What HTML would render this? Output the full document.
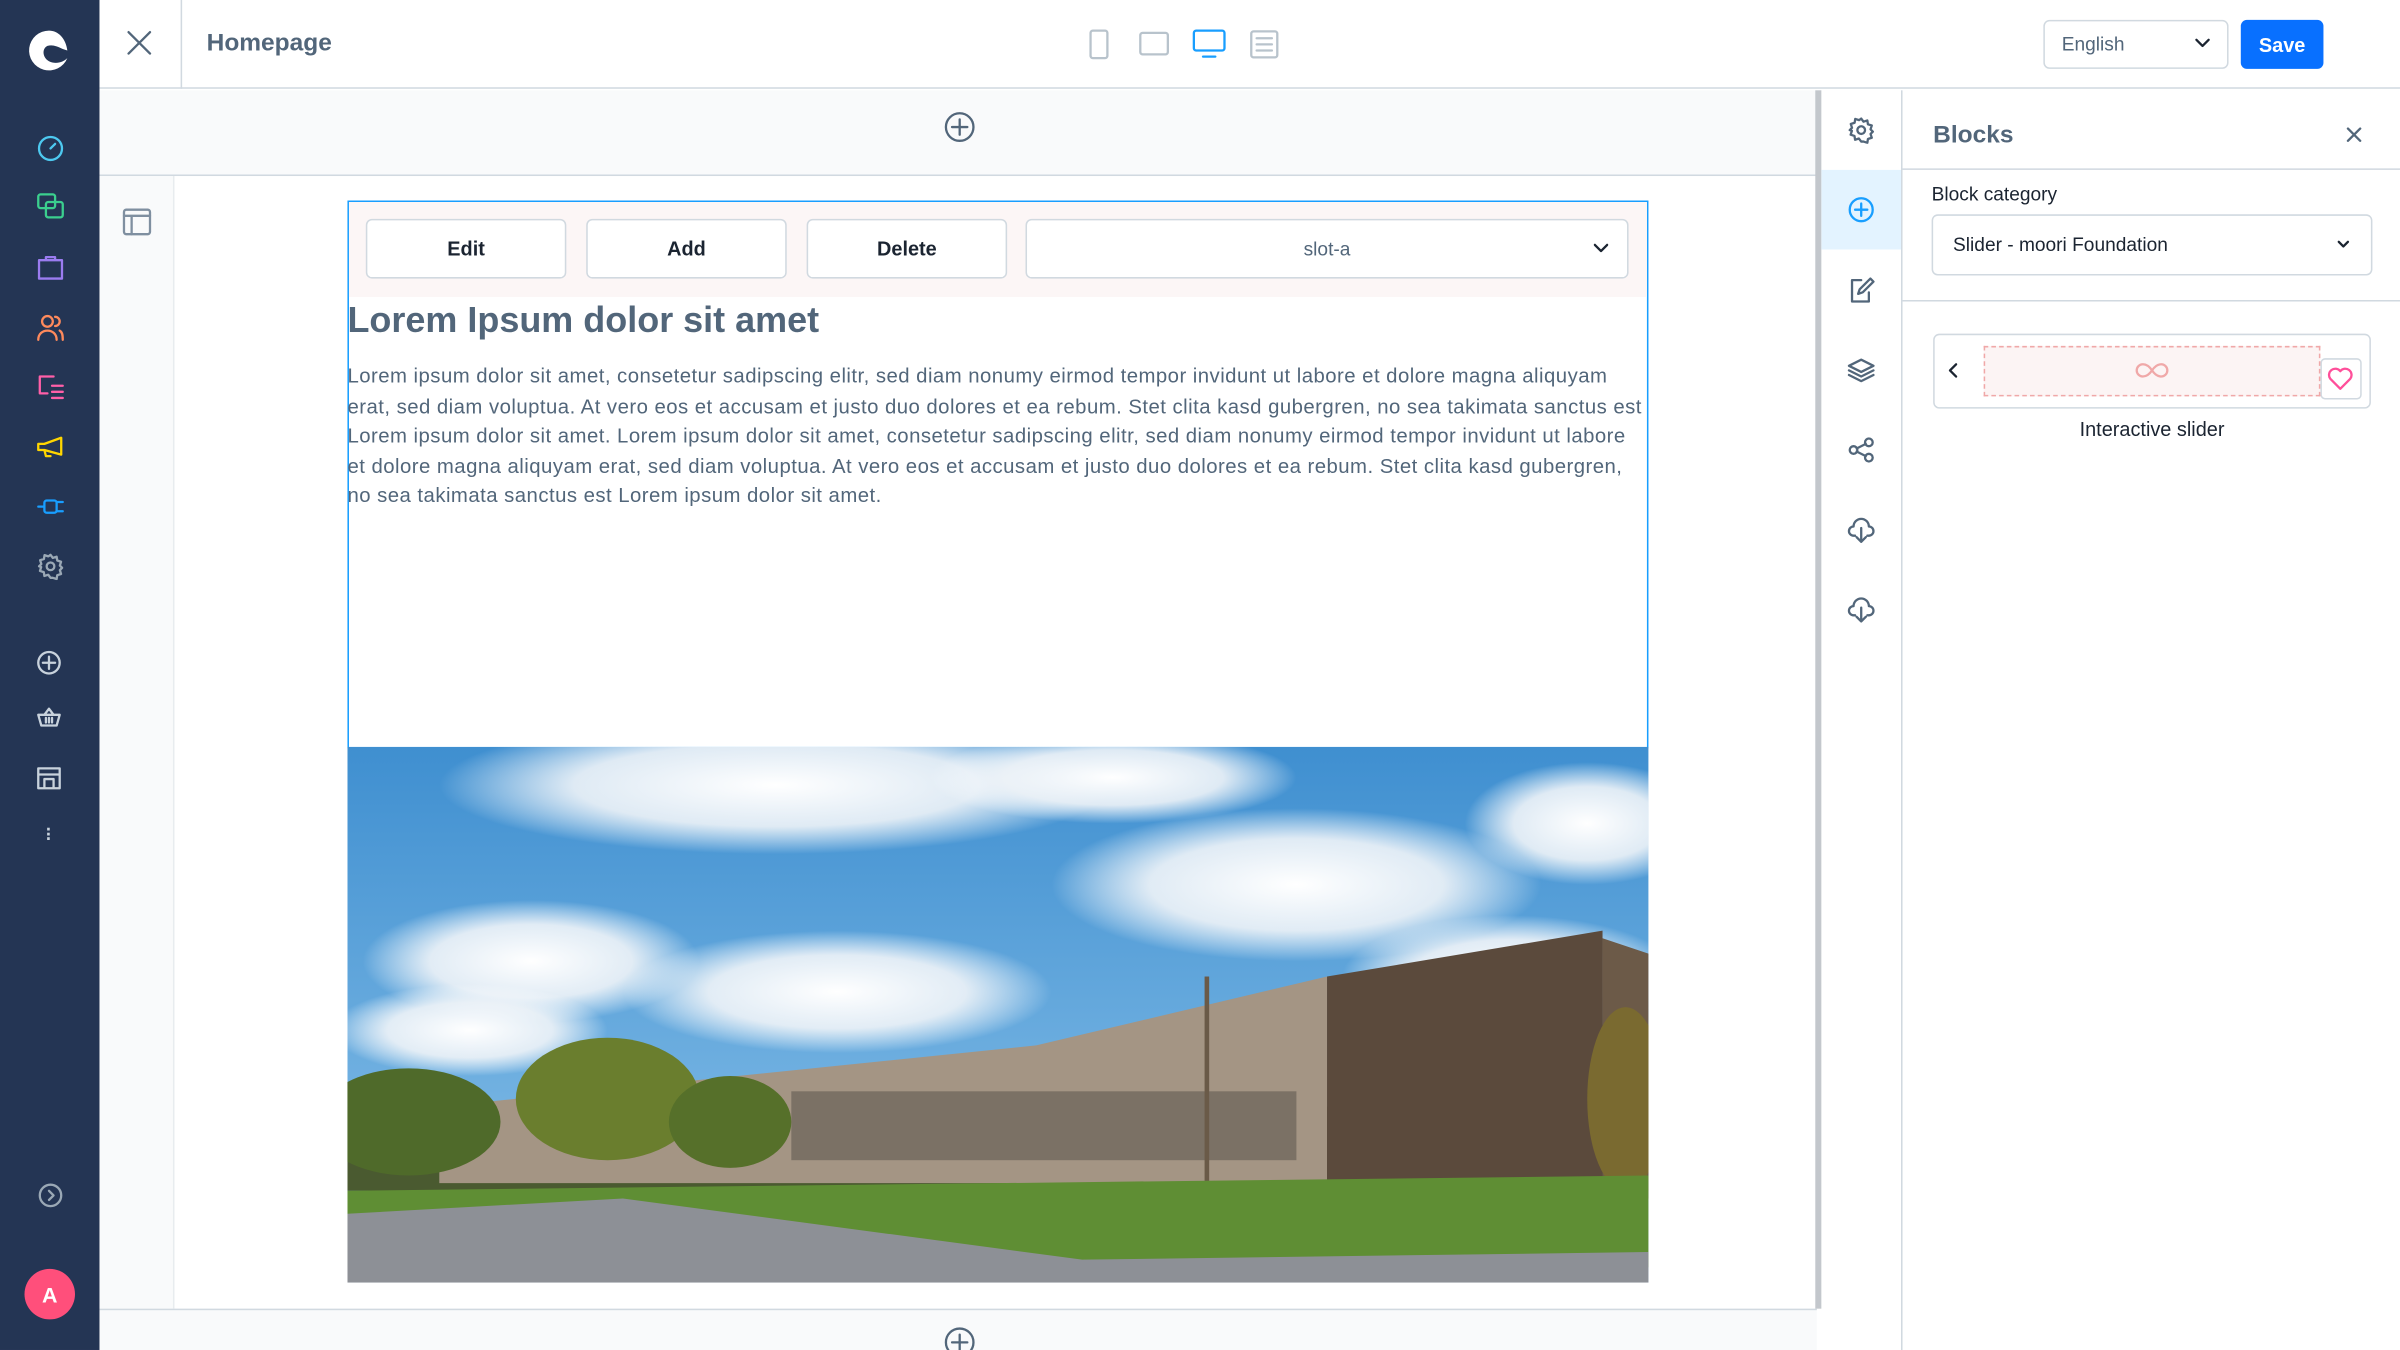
<!DOCTYPE html>
<html><head><meta charset="utf-8"><style>
*{box-sizing:border-box;margin:0;padding:0}
html,body{width:2400px;height:1350px;overflow:hidden;background:#fff}
#r{width:1568px;height:882px;transform:scale(1.5306);transform-origin:0 0;position:relative;font-family:"Liberation Sans",sans-serif;color:#52667a}
.a{position:absolute}
svg{position:absolute;fill:none;stroke-width:1.5;stroke-linecap:round;stroke-linejoin:round}
.btn{position:absolute;top:143px;height:39px;width:131px;border:1px solid #d1d9e0;border-radius:4px;background:#fff;font-size:13px;font-weight:bold;color:#1b2431;display:flex;align-items:center;justify-content:center}
</style></head><body><div id="r">
<div class="a" style="left:0;top:0;width:65px;height:882px;background:#243554"></div>
<svg style="left:16px;top:17px" width="32" height="32" viewBox="0 0 32 32"><path d="M16 3a13 13 0 1 0 12 18c-3 3-8 4-12 2-4-2-5-8-1-10 3-1 6 0 10 2l3 1c-1-8-6-13-12-13z" fill="#fff" stroke="none"/></svg>
<svg style="left:24px;top:88px" width="18" height="18" viewBox="0 0 18 18" stroke="#4dc9f0"><circle cx="9" cy="9" r="7.5"/><path d="M9 9l3-3"/></svg>
<svg style="left:24px;top:126px" width="18" height="18" viewBox="0 0 18 18" stroke="#3bcf8e"><rect x="1" y="1" width="11" height="9" rx="1.5"/><rect x="6" y="6" width="11" height="10" rx="1.5"/></svg>
<svg style="left:24px;top:166px" width="18" height="18" viewBox="0 0 18 18" stroke="#9b7cf0"><path d="M1.5 4h15v12h-15zM6 4V2h6v2"/></svg>
<svg style="left:24px;top:205px" width="18" height="18" viewBox="0 0 18 18" stroke="#ff8a5c"><circle cx="7" cy="5" r="3.5"/><path d="M1 17c0-4 3-6 6-6s6 2 6 6M12 2a3 3 0 0 1 0 6M15 11c2 1 2 4 2 6"/></svg>
<svg style="left:24px;top:244px" width="18" height="18" viewBox="0 0 18 18" stroke="#ff5fa8"><path d="M8 2H2v11h5M10 8h7M10 12h7M10 16h7M8 2h3"/></svg>
<svg style="left:24px;top:283px" width="18" height="18" viewBox="0 0 18 18" stroke="#ffd600"><path d="M1 7h4l11-4v11L5 11H1zM5 11l1 4h3"/></svg>
<svg style="left:24px;top:322px" width="18" height="18" viewBox="0 0 18 18" stroke="#189eff"><rect x="5" y="5" width="8" height="8" rx="1.5"/><path d="M1 9h4M13 6h4M13 12h4"/></svg>
<svg style="left:24px;top:361px" width="18" height="18" viewBox="0 0 18 18" stroke="#9aa8b5"><circle cx="9" cy="9" r="2.5"/><path d="M9 1.5l1.5 2 2.5-.8.4 2.5 2.5.8-.8 2.5 1.5 1.5-1.5 1.5.8 2.5-2.5.8-.4 2.5-2.5-.8L9 16.5l-1.5-2-2.5.8-.4-2.5-2.5-.8.8-2.5L1.5 9 3 7.5l-.8-2.5 2.5-.8.4-2.5 2.5.8z"/></svg>
<svg style="left:23px;top:424px" width="18" height="18" viewBox="0 0 18 18" stroke="#c8d2dc"><circle cx="9" cy="9" r="7"/><path d="M9 5v8M5 9h8"/></svg>
<svg style="left:23px;top:460px" width="18" height="18" viewBox="0 0 18 18" stroke="#c8d2dc"><path d="M2 7h14l-2 7H4zM6 7l3-4 3 4M7 9v3M9 9v3M11 9v3"/></svg>
<svg style="left:23px;top:499px" width="18" height="18" viewBox="0 0 18 18" stroke="#c8d2dc"><path d="M2 3h14v13H2zM2 7h14M6 16v-6h6v6"/></svg>
<div class="a" style="left:30px;top:541px;color:#c8d2dc;font-size:12px;line-height:3px;font-weight:bold">·<br>·<br>·</div>
<svg style="left:24px;top:772px" width="18" height="18" viewBox="0 0 18 18" stroke="#9aa8b5"><circle cx="9" cy="9" r="7"/><path d="M8 6l3 3-3 3"/></svg>
<div class="a" style="left:16px;top:829px;width:33px;height:33px;border-radius:50%;background:#ff4f7b;color:#fff;font-size:14px;font-weight:bold;display:flex;align-items:center;justify-content:center">A</div>
<div class="a" style="left:65px;top:0;width:1503px;height:58px;border-bottom:1px solid #d1d9e0;background:#fff"></div>
<svg style="left:82px;top:19px" width="18" height="18" viewBox="0 0 18 18" stroke="#52667a"><path d="M2 2l14 14M16 2L2 16"/></svg>
<div class="a" style="left:118px;top:0;width:1px;height:58px;background:#d1d9e0"></div>
<div class="a" style="left:135px;top:20px;font-size:16px;font-weight:bold">Homepage</div>
<svg style="left:711px;top:19px" width="14" height="20" viewBox="0 0 14 20" stroke="#b8c3cc" stroke-width="1.2"><rect x="1.5" y="1" width="11" height="18" rx="1.5"/></svg>
<svg style="left:744px;top:20px" width="20" height="17" viewBox="0 0 20 17" stroke="#b8c3cc" stroke-width="1.2"><rect x="1" y="1.5" width="18" height="14" rx="1.5"/></svg>
<svg style="left:779px;top:19px" width="22" height="20" viewBox="0 0 22 20" stroke="#189eff"><rect x="1" y="1" width="20" height="13" rx="1.5"/><path d="M7 18h8"/></svg>
<svg style="left:816px;top:19px" width="20" height="20" viewBox="0 0 20 20" stroke="#b8c3cc" stroke-width="1.2"><rect x="1.5" y="1.5" width="17" height="17" rx="1.5"/><path d="M5 6h10M5 10h10M5 14h10"/></svg>
<div class="a" style="left:1335px;top:13px;width:121px;height:32px;border:1px solid #d1d9e0;border-radius:4px;font-size:12.5px;padding:8px 11px">English</div>
<svg style="left:1433px;top:23px" width="12" height="10" viewBox="0 0 12 10" stroke="#1b2431" stroke-width="1.8"><path d="M2 3l4 4 4-4"/></svg>
<div class="a" style="left:1464px;top:13px;width:54px;height:32px;border-radius:4px;background:#0870ff;color:#fff;font-size:13px;font-weight:bold;display:flex;align-items:center;justify-content:center">Save</div>
<div class="a" style="left:65px;top:59px;width:1122px;height:56px;background:#f9fafb;border-bottom:1px solid #d1d9e0"></div>
<svg style="left:617px;top:73px" width="20" height="20" viewBox="0 0 20 20" stroke="#52667a" stroke-width="1.3"><circle cx="10" cy="10" r="9"/><path d="M10 5v10M5 10h10"/></svg>
<div class="a" style="left:65px;top:115px;width:49px;height:740px;background:#f9fafb;border-right:1px solid #e8ecef"></div>
<svg style="left:80px;top:136px" width="19" height="18" viewBox="0 0 19 18" stroke="#7f8fa0" stroke-width="1.3"><rect x="1" y="1" width="17" height="16" rx="1.5"/><path d="M1 5h17M6 5v12"/></svg>
<div class="a" style="left:65px;top:855px;width:1122px;height:27px;background:#f9fafb;border-top:1px solid #d1d9e0"></div>
<svg style="left:617px;top:867px" width="20" height="20" viewBox="0 0 20 20" stroke="#52667a" stroke-width="1.3"><circle cx="10" cy="10" r="9"/><path d="M10 5v10M5 10h10"/></svg>
<div class="a" style="left:227px;top:131px;width:850px;height:358px;border:1px solid #189eff"></div>
<div class="a" style="left:228px;top:132px;width:848px;height:62px;background:#fcf6f6"></div>
<div class="btn" style="left:239px">Edit</div>
<div class="btn" style="left:383px">Add</div>
<div class="btn" style="left:527px">Delete</div>
<div class="btn" style="left:670px;width:394px;font-weight:normal;color:#52667a;font-size:12.5px">slot-a</div>
<svg style="left:1040px;top:157px" width="12" height="10" viewBox="0 0 12 10" stroke="#1b2431" stroke-width="1.8"><path d="M2 3l4 4 4-4"/></svg>
<div class="a" style="left:227px;top:196px;font-size:23.5px;font-weight:bold">Lorem Ipsum dolor sit amet</div>
<div class="a" style="left:227px;top:236px;width:848px;font-size:13.3px;line-height:19.6px;letter-spacing:0.3px">Lorem ipsum dolor sit amet, consetetur sadipscing elitr, sed diam nonumy eirmod tempor invidunt ut labore et dolore magna aliquyam erat, sed diam voluptua. At vero eos et accusam et justo duo dolores et ea rebum. Stet clita kasd gubergren, no sea takimata sanctus est Lorem ipsum dolor sit amet. Lorem ipsum dolor sit amet, consetetur sadipscing elitr, sed diam nonumy eirmod tempor invidunt ut labore et dolore magna aliquyam erat, sed diam voluptua. At vero eos et accusam et justo duo dolores et ea rebum. Stet clita kasd gubergren, no sea takimata sanctus est Lorem ipsum dolor sit amet.</div>
<svg style="left:227px;top:488px" width="850" height="350" viewBox="0 0 850 350" preserveAspectRatio="none" stroke="none">
<defs><linearGradient id="s" x1="0" y1="0" x2="0" y2="1"><stop offset="0" stop-color="#3f8fd0"/><stop offset="1" stop-color="#8cc3ea"/></linearGradient>
<radialGradient id="c"><stop offset="0" stop-color="#fff"/><stop offset=".6" stop-color="#f0f4f8" stop-opacity=".9"/><stop offset="1" stop-color="#fff" stop-opacity="0"/></radialGradient></defs>
<rect width="850" height="350" fill="url(#s)"/>
<ellipse cx="280" cy="25" rx="220" ry="45" fill="url(#c)"/>
<ellipse cx="120" cy="140" rx="110" ry="40" fill="url(#c)"/>
<ellipse cx="320" cy="160" rx="140" ry="40" fill="url(#c)"/>
<ellipse cx="80" cy="185" rx="90" ry="30" fill="url(#c)"/>
<ellipse cx="620" cy="90" rx="160" ry="50" fill="url(#c)"/>
<ellipse cx="810" cy="50" rx="80" ry="40" fill="url(#c)"/>
<ellipse cx="760" cy="150" rx="110" ry="40" fill="url(#c)"/>
<ellipse cx="500" cy="20" rx="120" ry="30" fill="url(#c)"/>
<rect x="0" y="235" width="850" height="55" fill="#4a5a30"/>
<polygon points="60,235 450,195 640,150 640,285 60,285" fill="#a49584"/>
<polygon points="640,150 820,120 820,295 640,290" fill="#5b4a3c"/>
<polygon points="820,125 850,135 850,295 820,295" fill="#6c5a48"/>
<rect x="290" y="225" width="330" height="45" fill="#5a544c" opacity=".55"/>
<ellipse cx="40" cy="245" rx="60" ry="35" fill="#4f6a2a"/>
<ellipse cx="170" cy="230" rx="60" ry="40" fill="#6a7e2e"/>
<ellipse cx="250" cy="245" rx="40" ry="30" fill="#56702a"/>
<ellipse cx="835" cy="230" rx="25" ry="60" fill="#7a6a30"/>
<rect x="560" y="150" width="3" height="150" fill="#6a5a48"/>
<polygon points="0,290 850,280 850,340 0,340" fill="#5f8e34"/>
<polygon points="0,305 180,295 480,335 850,330 850,350 0,350" fill="#8d9096"/>
</svg>
<div class="a" style="left:1186px;top:59px;width:4px;height:796px;background:#c3c7cc"></div>
<div class="a" style="left:1190px;top:59px;width:53px;height:823px;border-right:1px solid #d1d9e0;background:#fff"></div>
<div class="a" style="left:1190px;top:111px;width:52px;height:52px;background:#e3f3ff"></div>
<svg style="left:1207px;top:76px" width="18" height="18" viewBox="0 0 18 18" stroke="#52667a" stroke-width="1.2"><circle cx="9" cy="9" r="2.5"/><path d="M9 1.5l1.5 2 2.5-.8.4 2.5 2.5.8-.8 2.5 1.5 1.5-1.5 1.5.8 2.5-2.5.8-.4 2.5-2.5-.8L9 16.5l-1.5-2-2.5.8-.4-2.5-2.5-.8.8-2.5L1.5 9 3 7.5l-.8-2.5 2.5-.8.4-2.5 2.5.8z"/></svg>
<svg style="left:1207px;top:128px" width="18" height="18" viewBox="0 0 18 18" stroke="#189eff" stroke-width="1.3"><circle cx="9" cy="9" r="7.5"/><path d="M9 5v8M5 9h8"/></svg>
<svg style="left:1207px;top:181px" width="18" height="18" viewBox="0 0 18 18" stroke="#52667a" stroke-width="1.3"><path d="M9 2H3v14h11v-6M7 11l1-3 7-7 2 2-7 7z"/></svg>
<svg style="left:1207px;top:233px" width="18" height="18" viewBox="0 0 18 18" stroke="#52667a" stroke-width="1.3"><path d="M9 2l8 4-8 4-8-4zM1 9l8 4 8-4M1 12l8 4 8-4"/></svg>
<svg style="left:1207px;top:285px" width="18" height="18" viewBox="0 0 18 18" stroke="#52667a" stroke-width="1.3"><circle cx="4" cy="9" r="2.5"/><circle cx="14" cy="4" r="2.5"/><circle cx="14" cy="14" r="2.5"/><path d="M6 8l6-3M6 10l6 3"/></svg>
<svg style="left:1207px;top:337px" width="18" height="18" viewBox="0 0 18 18" stroke="#52667a" stroke-width="1.3"><path d="M5 13H4a3 3 0 0 1 0-6 5 5 0 0 1 10 0 3 3 0 0 1 0 6h-1M9 8v9M6 14l3 3 3-3"/></svg>
<svg style="left:1207px;top:389px" width="18" height="18" viewBox="0 0 18 18" stroke="#52667a" stroke-width="1.3"><path d="M5 13H4a3 3 0 0 1 0-6 5 5 0 0 1 10 0 3 3 0 0 1 0 6h-1M9 8v9M6 14l3 3 3-3"/></svg>
<div class="a" style="left:1263px;top:80px;font-size:16px;font-weight:bold">Blocks</div>
<svg style="left:1532px;top:82px" width="12" height="12" viewBox="0 0 12 12" stroke="#52667a" stroke-width="2"><path d="M2 2l8 8M10 2l-8 8"/></svg>
<div class="a" style="left:1243px;top:110px;width:325px;height:1px;background:#d1d9e0"></div>
<div class="a" style="left:1262px;top:120px;font-size:12.5px;color:#1b2431">Block category</div>
<div class="a" style="left:1262px;top:140px;width:288px;height:40px;border:1px solid #d1d9e0;border-radius:4px;font-size:12.5px;color:#1b2431;padding:12px 13px">Slider - moori Foundation</div>
<svg style="left:1525px;top:155px" width="12" height="10" viewBox="0 0 12 10" stroke="#1b2431" stroke-width="2.2"><path d="M3 3l3 3 3-3"/></svg>
<div class="a" style="left:1243px;top:196px;width:325px;height:1px;background:#d1d9e0"></div>
<div class="a" style="left:1263px;top:218px;width:286px;height:49px;border:1px solid #d1d9e0;border-radius:4px"></div>
<svg style="left:1271px;top:236px" width="10" height="12" viewBox="0 0 10 12" stroke="#1b2431" stroke-width="1.4"><path d="M7 2L3 6l4 4"/></svg>
<div class="a" style="left:1296px;top:226px;width:220px;height:33px;border:1px dashed #f0a8a8;background:#fcf4f4"></div>
<svg style="left:1395px;top:236px" width="22" height="12" viewBox="0 0 22 12" stroke="#f0a8a8" stroke-width="1.6"><path d="M11 6c-2-3-4-4-6-4a4 4 0 0 0 0 8c2 0 4-1 6-4s4-4 6-4a4 4 0 0 1 0 8c-2 0-4-1-6-4z"/></svg>
<div class="a" style="left:1516px;top:234px;width:27px;height:27px;border:1px solid #d1d9e0;border-radius:3px;background:#fff"></div>
<svg style="left:1520px;top:239px" width="18" height="17" viewBox="0 0 18 17" stroke="#ff4f9a" stroke-width="1.5"><path d="M9 15L2.5 8.5A3.8 3.8 0 0 1 9 3.5a3.8 3.8 0 0 1 6.5 5z"/></svg>
<div class="a" style="left:1263px;top:273px;width:286px;text-align:center;font-size:13px;color:#1b2431">Interactive slider</div>
</div></body></html>
